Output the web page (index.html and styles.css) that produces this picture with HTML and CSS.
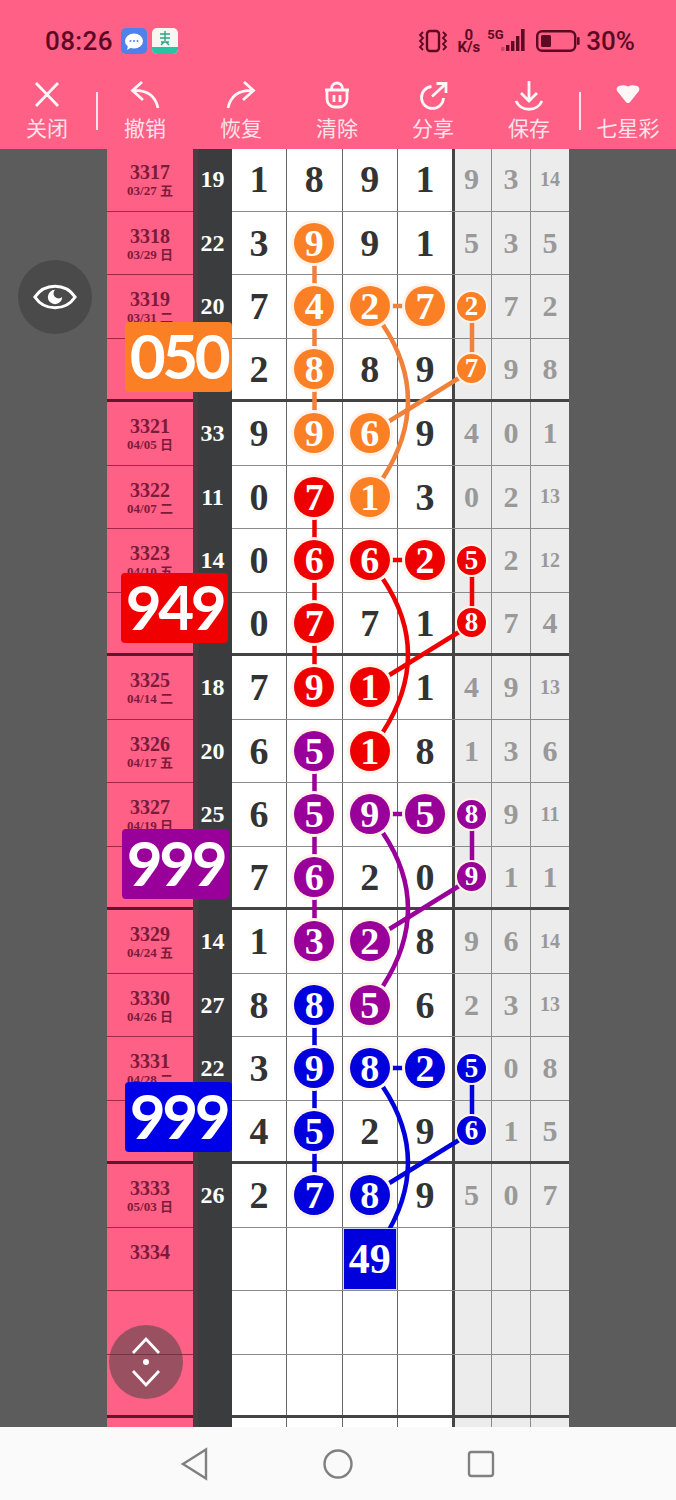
FILE: index.html
```html
<!DOCTYPE html>
<html>
<head>
  <meta charset="utf-8">
  <title>七星彩</title>
  <link rel="stylesheet" href="styles.css">
</head>
<body>
  <header class="top">
    <div class="status">
      <span class="time">08:26</span>
      <svg class="app-icon" viewBox="0 0 26 26"><rect width="26" height="26" rx="5" fill="#4f82e8"/><ellipse cx="13" cy="13" rx="9" ry="7.5" fill="#fff"/><path d="M7 18l-1 4 5-3z" fill="#fff"/><circle cx="9.5" cy="13" r="1" fill="#4f82e8"/><circle cx="13" cy="13" r="1" fill="#4f82e8"/><circle cx="16.5" cy="13" r="1" fill="#4f82e8"/></svg>
      <svg class="app-icon" viewBox="0 0 26 26"><rect width="26" height="26" rx="5" fill="#f7f7f2"/><path d="M0 19h26v2a5 5 0 0 1-5 5H5a5 5 0 0 1-5-5z" fill="#27c4a4"/><path d="M8 6h10M13 3v10M8 10h10M9 14h8M12 14l-3 3M14 14l3 3" stroke="#2aa588" stroke-width="1.4" fill="none"/></svg>
      <span class="status-right">
        <svg class="vibrate" viewBox="0 0 30 24" fill="none" stroke="#5c0a24" stroke-width="2.4"><rect x="9" y="2" width="12" height="20" rx="3"/><path d="M5 3L2 6l3 3-3 3 3 3-3 3 3 3M25 3l3 3-3 3 3 3-3 3 3 3-3 3" stroke-width="1.8"/></svg>
        <span class="speed"><b>0</b><b>K/s</b></span>
        <span class="signal">
          <span class="five-g">5G</span>
          <svg viewBox="0 0 28 24" fill="#5c0a24"><rect x="1" y="18" width="3.4" height="4" opacity=".3"/><rect x="6" y="16" width="3.4" height="6"/><rect x="11" y="12" width="3.4" height="10"/><rect x="16" y="7" width="3.4" height="15"/><rect x="21" y="0" width="3.6" height="22"/></svg>
        </span>
        <svg class="battery" viewBox="0 0 44 24"><rect x="1.2" y="2.2" width="38" height="19.6" rx="5" fill="none" stroke="#5c0a24" stroke-width="2.4"/><rect x="5" y="6" width="10" height="12" rx="1.5" fill="#5c0a24"/><rect x="41" y="8" width="2.6" height="8" rx="1.2" fill="#5c0a24"/></svg>
        <span class="percent">30%</span>
      </span>
    </div>
    <nav class="tools">
      <div class="tool first">
        <svg viewBox="0 0 32 32"><path d="M5 4l22 23M27 4L5 27"/></svg>
        <span>关闭</span>
      </div>
      <i class="sep"></i>
      <div class="tool">
        <svg viewBox="0 0 32 32"><path d="M13 3L3.5 11.5 14 21M3.5 11.5C15 11 26 15 29 29"/></svg>
        <span>撤销</span>
      </div>
      <div class="tool">
        <svg viewBox="0 0 32 32"><path d="M19 3l9.500 8.500L18 21M28.500 11.500C17 11 6 15 3 29"/></svg>
        <span>恢复</span>
      </div>
      <div class="tool">
        <svg viewBox="0 0 32 32"><path d="M4 11h24M10.500 10c0-8 11-8 11 0M6 11v9a8 8 0 0 0 8 8h4a8 8 0 0 0 8-8v-9M13 16v7M19 16v7"/></svg>
        <span>清除</span>
      </div>
      <div class="tool">
        <svg viewBox="0 0 32 32"><path d="M14.500 7.500A11 11 0 1 0 26.500 19M15 17.500L28 5.500M19.500 4.500h9.500V14"/></svg>
        <span>分享</span>
      </div>
      <div class="tool">
        <svg viewBox="0 0 32 32"><path d="M16 2v20M8 14l8 8 8-8M3 22c5 11 21 11 26 0"/></svg>
        <span>保存</span>
      </div>
      <i class="sep"></i>
      <div class="tool">
        <svg class="heart" viewBox="0 0 32 32"><path d="M7 7c3-1 6-1 9 .5 3-1.500 6-1.500 9-.5 2.500 1 3 3.500 1.500 5.500l-8 10c-1.500 2-3.500 2-5 0l-8-10C4 10.500 4.500 8 7 7z"/></svg>
        <span>七星彩</span>
      </div>
    </nav>
  </header>

  <main class="stage">
    <div class="sheet">
      <div class="row"><div class="date">3317<small>03/27 五</small></div><div class="sum">19</div><div class="num">1</div><div class="num">8</div><div class="num">9</div><div class="num">1</div><div class="side edge">9</div><div class="side">3</div><div class="side tiny">14</div></div>
      <div class="row"><div class="date">3318<small>03/29 日</small></div><div class="sum">22</div><div class="num">3</div><div class="num"><b class="ball orange">9</b></div><div class="num">9</div><div class="num">1</div><div class="side edge">5</div><div class="side">3</div><div class="side">5</div></div>
      <div class="row"><div class="date">3319<small>03/31 二</small></div><div class="sum">20</div><div class="num">7</div><div class="num"><b class="ball orange">4</b></div><div class="num"><b class="ball orange">2</b></div><div class="num"><b class="ball orange">7</b></div><div class="side edge"><b class="ball small orange">2</b></div><div class="side">7</div><div class="side">2</div></div>
      <div class="row end"><div class="date"></div><div class="sum"></div><div class="num">2</div><div class="num"><b class="ball orange">8</b></div><div class="num">8</div><div class="num">9</div><div class="side edge"><b class="ball small orange">7</b></div><div class="side">9</div><div class="side">8</div></div>

      <div class="row"><div class="date">3321<small>04/05 日</small></div><div class="sum">33</div><div class="num">9</div><div class="num"><b class="ball orange">9</b></div><div class="num"><b class="ball orange">6</b></div><div class="num">9</div><div class="side edge">4</div><div class="side">0</div><div class="side">1</div></div>
      <div class="row"><div class="date">3322<small>04/07 二</small></div><div class="sum">11</div><div class="num">0</div><div class="num"><b class="ball red">7</b></div><div class="num"><b class="ball orange">1</b></div><div class="num">3</div><div class="side edge">0</div><div class="side">2</div><div class="side tiny">13</div></div>
      <div class="row"><div class="date">3323<small>04/10 五</small></div><div class="sum">14</div><div class="num">0</div><div class="num"><b class="ball red">6</b></div><div class="num"><b class="ball red">6</b></div><div class="num"><b class="ball red">2</b></div><div class="side edge"><b class="ball small red">5</b></div><div class="side">2</div><div class="side tiny">12</div></div>
      <div class="row end"><div class="date"></div><div class="sum"></div><div class="num">0</div><div class="num"><b class="ball red">7</b></div><div class="num">7</div><div class="num">1</div><div class="side edge"><b class="ball small red">8</b></div><div class="side">7</div><div class="side">4</div></div>

      <div class="row"><div class="date">3325<small>04/14 二</small></div><div class="sum">18</div><div class="num">7</div><div class="num"><b class="ball red">9</b></div><div class="num"><b class="ball red">1</b></div><div class="num">1</div><div class="side edge">4</div><div class="side">9</div><div class="side tiny">13</div></div>
      <div class="row"><div class="date">3326<small>04/17 五</small></div><div class="sum">20</div><div class="num">6</div><div class="num"><b class="ball purple">5</b></div><div class="num"><b class="ball red">1</b></div><div class="num">8</div><div class="side edge">1</div><div class="side">3</div><div class="side">6</div></div>
      <div class="row"><div class="date">3327<small>04/19 日</small></div><div class="sum">25</div><div class="num">6</div><div class="num"><b class="ball purple">5</b></div><div class="num"><b class="ball purple">9</b></div><div class="num"><b class="ball purple">5</b></div><div class="side edge"><b class="ball small purple">8</b></div><div class="side">9</div><div class="side tiny">11</div></div>
      <div class="row end"><div class="date"></div><div class="sum"></div><div class="num">7</div><div class="num"><b class="ball purple">6</b></div><div class="num">2</div><div class="num">0</div><div class="side edge"><b class="ball small purple">9</b></div><div class="side">1</div><div class="side">1</div></div>

      <div class="row"><div class="date">3329<small>04/24 五</small></div><div class="sum">14</div><div class="num">1</div><div class="num"><b class="ball purple">3</b></div><div class="num"><b class="ball purple">2</b></div><div class="num">8</div><div class="side edge">9</div><div class="side">6</div><div class="side tiny">14</div></div>
      <div class="row"><div class="date">3330<small>04/26 日</small></div><div class="sum">27</div><div class="num">8</div><div class="num"><b class="ball blue">8</b></div><div class="num"><b class="ball purple">5</b></div><div class="num">6</div><div class="side edge">2</div><div class="side">3</div><div class="side tiny">13</div></div>
      <div class="row"><div class="date">3331<small>04/28 二</small></div><div class="sum">22</div><div class="num">3</div><div class="num"><b class="ball blue">9</b></div><div class="num"><b class="ball blue">8</b></div><div class="num"><b class="ball blue">2</b></div><div class="side edge"><b class="ball small blue">5</b></div><div class="side">0</div><div class="side">8</div></div>
      <div class="row end"><div class="date"></div><div class="sum"></div><div class="num">4</div><div class="num"><b class="ball blue">5</b></div><div class="num">2</div><div class="num">9</div><div class="side edge"><b class="ball small blue">6</b></div><div class="side">1</div><div class="side">5</div></div>

      <div class="row"><div class="date">3333<small>05/03 日</small></div><div class="sum">26</div><div class="num">2</div><div class="num"><b class="ball blue">7</b></div><div class="num"><b class="ball blue">8</b></div><div class="num">9</div><div class="side edge">5</div><div class="side">0</div><div class="side">7</div></div>
      <div class="row"><div class="date">3334</div><div class="sum"></div><div class="num"></div><div class="num"></div><div class="num"><b class="total">49</b></div><div class="num"></div><div class="side edge"></div><div class="side"></div><div class="side"></div></div>
      <div class="row"><div class="date"></div><div class="sum"></div><div class="num"></div><div class="num"></div><div class="num"></div><div class="num"></div><div class="side edge"></div><div class="side"></div><div class="side"></div></div>
      <div class="row end"><div class="date"></div><div class="sum"></div><div class="num"></div><div class="num"></div><div class="num"></div><div class="num"></div><div class="side edge"></div><div class="side"></div><div class="side"></div></div>
      <div class="row"><div class="date"></div><div class="sum"></div><div class="num"></div><div class="num"></div><div class="num"></div><div class="num"></div><div class="side edge"></div><div class="side"></div><div class="side"></div></div>

      <!-- the same link shape is reused for every colour, one block (4 rows) lower each time -->
      <svg class="links" viewBox="107 148 462 1340">
        <defs>
          <g id="link" fill="none" stroke="currentColor" stroke-width="4.500">
            <path d="M314.500 243V433M370 306H425M472 306V370M472 370L370 433"/>
            <path d="M383 325Q433 400 383 478"/>
          </g>
        </defs>
        <use href="#link" class="orange-line"/>
        <use href="#link" class="red-line" y="254"/>
        <use href="#link" class="purple-line" y="508"/>
        <use href="#link" class="blue-line" y="762"/>
      </svg>

      <div class="badge orange-badge">050</div>
      <div class="badge red-badge">949</div>
      <div class="badge purple-badge">999</div>
      <div class="badge blue-badge">999</div>
    </div>

    <div class="float eye">
      <svg viewBox="0 0 48 48" fill="none" stroke="#fff" stroke-width="3.200"><path d="M3 24C13 9 35 9 45 24 35 39 13 39 3 24z"/><path d="M24 16.500a7.500 7.500 0 1 0 7.500 7.500 4.500 4.500 0 0 1-7.500-7.500z" fill="#fff" stroke="none"/></svg>
    </div>
    <div class="float scroll">
      <svg viewBox="0 0 48 56" fill="none" stroke="#fff" stroke-width="2.800"><path d="M11 19L24 5l13 14M11 37l13 14 13-14"/><circle cx="24" cy="28" r="3" fill="#fff" stroke="none"/></svg>
    </div>
  </main>

  <footer class="softkeys">
    <svg viewBox="0 0 30 36"><path d="M3 18L26 3.500v29z"/></svg>
    <svg viewBox="0 0 30 36"><circle cx="15" cy="18" r="13.500"/></svg>
    <svg viewBox="0 0 30 36"><rect x="3" y="6" width="24" height="24" rx="2.500"/></svg>
  </footer>
</body>
</html>
```

FILE: styles.css
```css
* {
  box-sizing: border-box;
}

body {
  margin: 0;
  width: 676px;
  height: 1500px;
  overflow: hidden;
  font-family: "Liberation Serif", "Noto Sans CJK SC", serif;
}

/* pink header */
.top {
  display: flex;
  flex-direction: column;
  height: 149px;
  padding-top: 28px;
  background-color: #ff6085;
  font-family: Roboto, "Noto Sans CJK SC", sans-serif;
}

.status {
  display: flex;
  align-items: center;
  height: 26px;
  padding-left: 45px;
}

.time {
  width: 76px;
  font-size: 26px;
  font-weight: 500;
  color: #5c0a24;
  letter-spacing: 0.4px;
}

.app-icon {
  width: 26px;
  height: 26px;
  margin-right: 5px;
}

.status-right {
  display: flex;
  align-items: center;
  margin-left: auto;
  padding-right: 41px;
  color: #5c0a24;
}

.vibrate {
  width: 30px;
  height: 24px;
}

.speed {
  display: flex;
  flex-direction: column;
  align-items: center;
  margin-left: 9px;
  font-size: 15px;
  line-height: 12px;
}

.signal {
  position: relative;
  margin-left: 7px;
  width: 41px;
  height: 24px;
}

.signal svg {
  position: absolute;
  right: 0;
  top: 0;
  width: 28px;
  height: 24px;
}

.five-g {
  position: absolute;
  left: 0;
  top: -1px;
  font-size: 13px;
  line-height: 14px;
  font-weight: 700;
}

.battery {
  width: 44px;
  height: 24px;
  margin-left: 8px;
}

.percent {
  margin-left: 6px;
  font-size: 26px;
  font-weight: 500;
}

.tools {
  display: flex;
  align-items: center;
  height: 74px;
  margin-top: 20px;
  color: #fde3ea;
}

.tool {
  width: 96px;
  display: flex;
  flex-direction: column;
  align-items: center;
  flex: none;
}

.tool.first {
  width: 94px;
}

.tool svg {
  width: 32px;
  height: 32px;
  fill: none;
  stroke: #fff;
  stroke-width: 2.800;
  opacity: 0.95;
}

.tool svg.heart {
  fill: #fff;
  stroke: none;
}

.tool span {
  margin-top: 3px;
  font-size: 21px;
  line-height: 30px;
}

.sep {
  flex: none;
  width: 2px;
  height: 38px;
  margin: 0 -1px 0 2px;
  background-color: #fde3ea;
}

/* table area */
.stage {
  position: relative;
  height: 1278px;
  overflow: hidden;
  background-color: #5c5c5c;
}

.sheet {
  position: relative;
  width: 462px;
  margin: -1px 0 0 107px;
}

.row {
  display: grid;
  grid-template-columns: 86px 39px 55px 55.5px 55.5px 54px 40px 39px 38px;
  height: 63.5px;
  border-bottom: 1px solid #8a8a8a;
}

.row.end {
  border-bottom: 3px solid #444;
}

.date {
  padding-top: 13px;
  margin-bottom: -1px;
  border-bottom: inherit;
  border-color: #a5254d;
  background-color: #ff6085;
  color: #7d1a3a;
  font-size: 20px;
  font-weight: 700;
  line-height: 22px;
  text-align: center;
}

.row.end .date {
  margin-bottom: -3px;
  border-color: #5a1a2c;
}

.date small {
  display: block;
  font-size: 13px;
  line-height: 15px;
}

.sum {
  margin-bottom: -3px;
  border-left: 5px solid #4a3d42;
  background-color: #3a3c3e;
  color: #fff;
  font-size: 24px;
  font-weight: 700;
  line-height: 62px;
  padding-right: 5px;
  text-align: center;
}

.num,
.side {
  display: flex;
  align-items: center;
  justify-content: center;
  font-weight: 700;
}

.num {
  border-right: 1px solid #666;
  background-color: #fff;
  color: #333;
  font-size: 38px;
}

.num:nth-child(6) {
  border-right: none;
}

.side {
  border-right: 1px solid #8a8a8a;
  background-color: #ececec;
  color: #999;
  font-size: 30px;
}

.side:last-child {
  border-right: none;
}

.side.edge {
  box-shadow: inset 3px 0 #444;
}

.side.tiny {
  font-size: 20px;
}

.ball {
  position: relative;
  z-index: 2;
  display: flex;
  align-items: center;
  justify-content: center;
  width: 40px;
  height: 40px;
  border-radius: 50%;
  color: #fff;
  font-size: 38px;
  box-shadow: 0 0 0 3px #fff3ea;
}

.ball.small {
  width: 29px;
  height: 29px;
  font-size: 27px;
  box-shadow: 0 0 0 2px #fff3ea;
}

.orange {
  background-color: #fb7f24;
}

.red {
  background-color: #ee0000;
}

.purple {
  background-color: #990099;
}

.blue {
  background-color: #0000dd;
}

.total {
  position: relative;
  z-index: 2;
  width: 52px;
  height: 60px;
  background-color: #0000dd;
  box-shadow: 0 0 0 1px #cfd8f5;
  color: #fff;
  font-size: 42px;
  line-height: 60px;
  text-align: center;
}

.links {
  position: absolute;
  left: 0;
  top: 0;
  width: 462px;
  height: 1340px;
  z-index: 1;
}

.orange-line {
  color: #f0813a;
}

.red-line {
  color: #ee0000;
}

.purple-line {
  color: #990099;
}

.blue-line {
  color: #0000dd;
}

/* big numbers over the date column */
.badge {
  position: absolute;
  z-index: 3;
  width: 107px;
  height: 70px;
  border-radius: 4px;
  color: #fff;
  font-family: Lato, sans-serif;
  font-size: 62px;
  font-weight: 700;
  letter-spacing: -3.500px;
  line-height: 67px;
  text-align: center;
}

.orange-badge {
  left: 18px;
  top: 174px;
  background-color: #fb7f24;
}

.red-badge {
  left: 14px;
  top: 425px;
  background-color: #f00000;
}

.purple-badge {
  left: 15px;
  top: 681px;
  background-color: #990099;
}

.blue-badge {
  left: 18px;
  top: 934px;
  background-color: #0000e8;
}

/* floating round buttons */
.float {
  position: absolute;
  z-index: 4;
  display: flex;
  align-items: center;
  justify-content: center;
  width: 74px;
  height: 74px;
  border-radius: 50%;
}

.eye {
  left: 18px;
  top: 111px;
  background-color: #4a4a4a;
}

.eye svg {
  width: 46px;
  height: 46px;
}

.scroll {
  left: 109px;
  top: 1176px;
  background-color: rgba(70, 70, 70, 0.55);
}

.scroll svg {
  width: 48px;
  height: 56px;
}

/* phone nav bar */
.softkeys {
  display: flex;
  justify-content: space-between;
  align-items: center;
  height: 73px;
  padding: 0 180px;
  background-color: #fafafa;
}

.softkeys svg {
  width: 30px;
  height: 36px;
  fill: none;
  stroke: #808080;
  stroke-width: 2.400;
}
```
